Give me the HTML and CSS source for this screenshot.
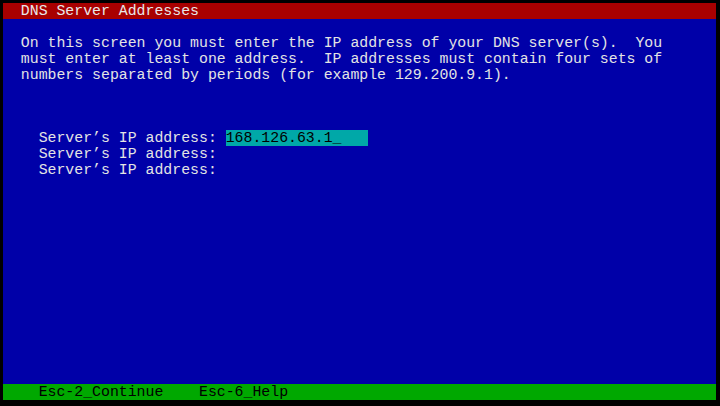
FILE: index.html
```html
<!DOCTYPE html>
<html lang="en">
<head>
<meta charset="utf-8">
<title>DNS Server Addresses</title>
<link rel="stylesheet" href="styles.css">
</head>
<body>
<div class="screen">
<div class="row title">  DNS Server Addresses</div>
<div class="content">
<div class="row">  On this screen you must enter the IP address of your DNS server(s).  You</div>
<div class="row">  must enter at least one address.  IP addresses must contain four sets of</div>
<div class="row">  numbers separated by periods (for example 129.200.9.1).</div>
<div class="form">
<div class="row">    Server’s IP address: <span class="field">168.126.63.1_</span></div>
<div class="row">    Server’s IP address:</div>
<div class="row">    Server’s IP address:</div>
</div>
</div>
<div class="row status">    Esc-2_Continue    Esc-6_Help</div>
</div>
</body>
</html>
```
FILE: styles.css
```css
html, body {
  margin: 0;
  padding: 0;
  background: #000000;
}
body {
  width: 720px;
  height: 406px;
  overflow: hidden;
}
.screen {
  margin: 3px 0 0 3px;
  width: 713px;
  height: 397px;
  background: #0000a8;
  display: flex;
  flex-direction: column;
  font-family: "Liberation Mono", "DejaVu Sans Mono", monospace;
  font-size: 14.85px;
  color: #e4e4e4;
}
.row {
  white-space: pre;
  height: 15.88px;
  line-height: 16.5px;
}
.title {
  background: #a80000;
  color: #e8e8e8;
}
.content {
  flex: 1;
  padding-top: 15.88px;
}
.form {
  margin-top: 47.64px;
}
.field {
  display: inline-block;
  width: 16ch;
  height: 15.88px;
  background: #00a8a8;
  color: #000000;
  vertical-align: top;
}
.status {
  background: #00a800;
  color: #000000;
}
```
